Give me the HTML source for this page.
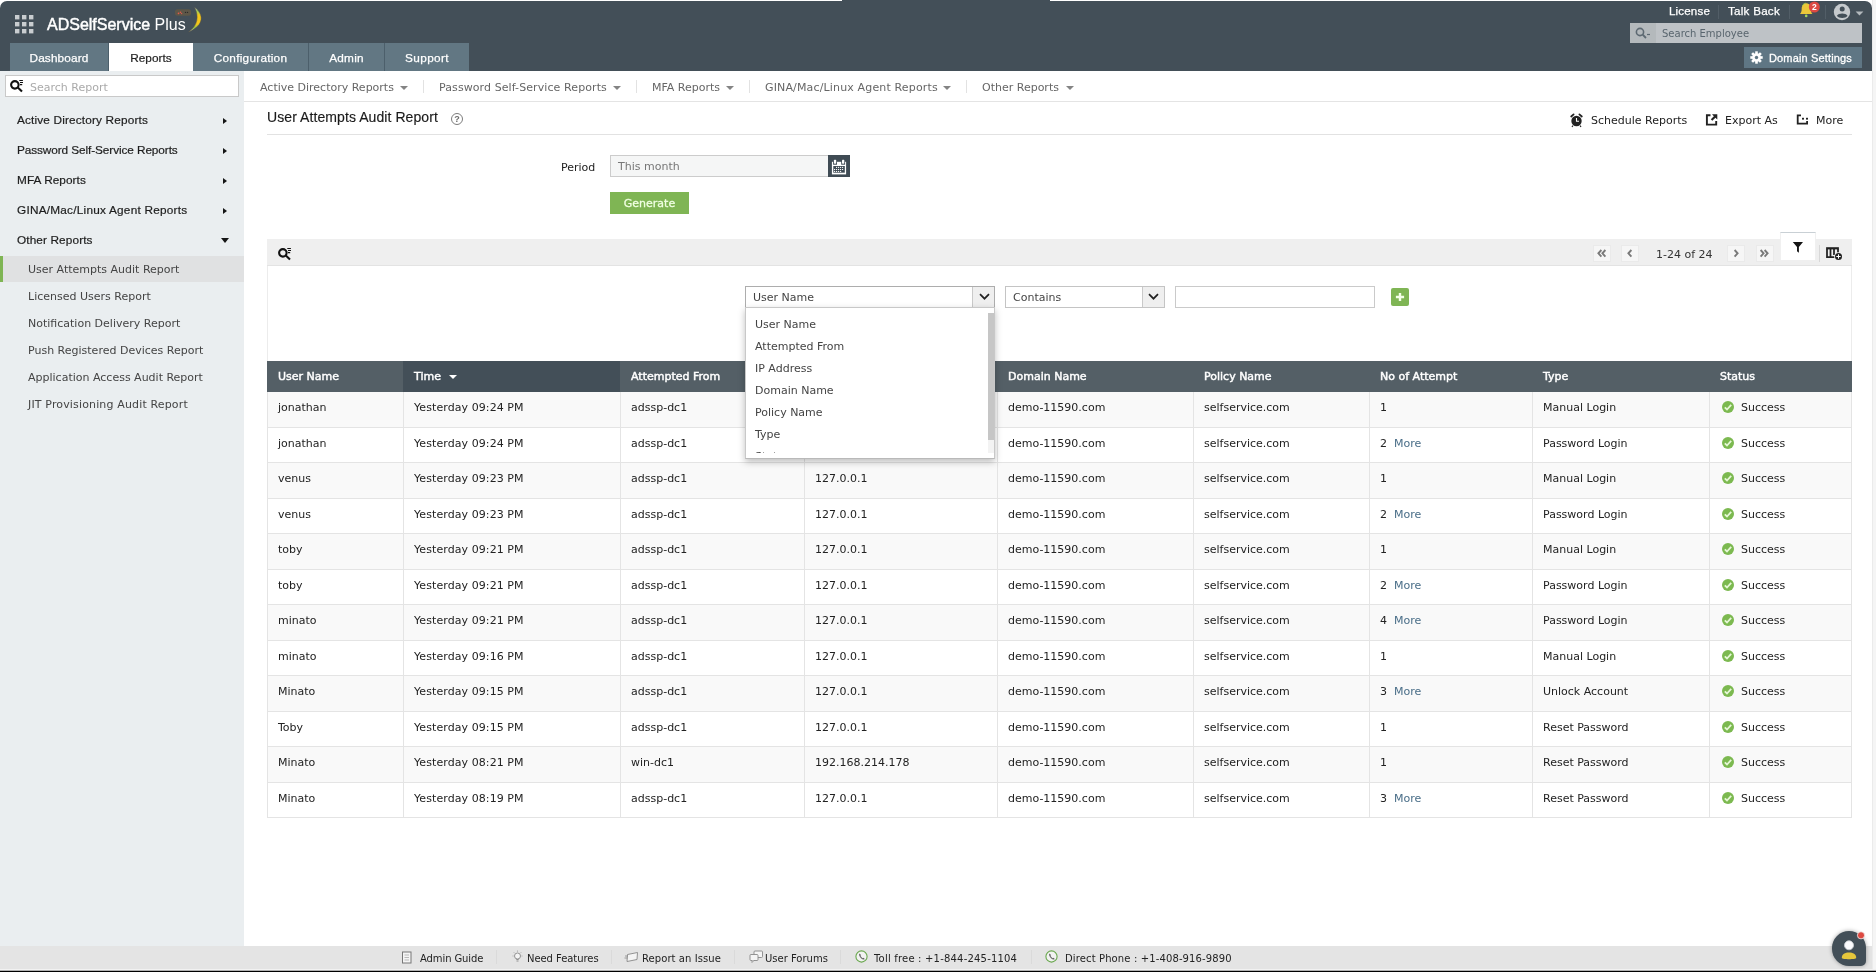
<!DOCTYPE html>
<html lang="en">
<head>
<meta charset="utf-8">
<title>ADSelfService Plus - User Attempts Audit Report</title>
<style>
*{box-sizing:border-box;margin:0;padding:0}
html,body{width:1876px;height:972px;overflow:hidden;background:#fff}
body{position:relative;font-family:"DejaVu Sans","Liberation Sans",sans-serif;font-size:11px;color:#333}
#app{position:absolute;left:0;top:0;width:1876px;height:972px;will-change:transform}
.abs{position:absolute}
.nw{white-space:nowrap}
.lib{font-family:"Liberation Sans",sans-serif}
svg{position:absolute;overflow:visible}
#rstrip{left:1872px;top:0;width:4px;height:970px;background:#f5f5f5;border-left:1px solid #ebebeb}
#botline{left:0;top:969px;width:1876px;height:3px;background:linear-gradient(#f2f2f2 0,#f2f2f2 1px,#b0b0b0 1px,#b0b0b0 2px,#000 2px)}
#hdr{left:0;top:1px;width:1872px;height:70px;background:#434f58;border-radius:7px 7px 0 0}
#topline{left:842px;top:0;width:208px;height:1px;background:#434f58}
.tab{top:43px;height:28px;background:#627783;color:#fff;font-family:"Liberation Sans",sans-serif;font-size:11.8px;text-align:center;line-height:31px;-webkit-text-stroke:.25px #fff;border-right:1px solid #4c5f6b}
.tab.act{background:#fff;color:#222;-webkit-text-stroke:.2px #222;border-right:none;height:29px}
.hl{top:4px;height:14px;line-height:14px;color:#fff;font-family:"Liberation Sans",sans-serif;font-size:11.6px;-webkit-text-stroke:.25px #fff;white-space:nowrap}
.hsep{top:5px;width:1px;height:14px;background:#525e67}
#semp{left:1630px;top:23px;width:232px;height:20px;background:#bec2c6}
#semp i{position:absolute;left:0;top:0;width:26px;height:20px;background:#b4b9bc}
#semp span{position:absolute;left:32px;top:4px;line-height:14px;color:#59656e;font-size:10px;white-space:nowrap}
#dset{left:1744px;top:47px;width:118px;height:21px;background:#5f7684;color:#fff;font-size:10.4px;font-weight:bold;line-height:21px;white-space:nowrap}
#dset span{position:absolute;left:25px;top:1px;font-family:"Liberation Sans",sans-serif;font-size:11px;letter-spacing:.15px}
#side{left:0;top:71px;width:244px;height:875px;background:#eaeef0}
#sbox{left:5px;top:75px;width:234px;height:22px;background:#fff;border:1px solid #c9c9c9}
#sbox span{position:absolute;left:24px;top:5px;line-height:13px;font-size:11px;color:#aaa;white-space:nowrap}
.sm{left:17px;height:16px;line-height:16px;font-family:"Liberation Sans",sans-serif;font-size:11.8px;color:#1d1d1d;white-space:nowrap;-webkit-text-stroke:.2px #1d1d1d}
.si{left:28px;height:14px;line-height:14px;font-size:11px;color:#444;white-space:nowrap}
#ssel{left:0;top:256px;width:244px;height:26px;background:#e0e1e2;border-left:3px solid #7fb554}
.arr-r{left:223px;width:0;height:0;border-top:3.5px solid transparent;border-bottom:3.5px solid transparent;border-left:4.8px solid #151515}
.arr-d{left:220.7px;width:0;height:0;border-left:4px solid transparent;border-right:4px solid transparent;border-top:5.2px solid #151515}
.sn{top:81px;font-size:11px;color:#666;white-space:nowrap;line-height:14px;height:14px}
.snsep{top:80px;width:1px;height:13px;background:#e2e2e2}
.car{top:86px;width:0;height:0;border-left:4px solid transparent;border-right:4px solid transparent;border-top:4px solid #848484}
#snline{left:244px;top:101px;width:1628px;height:1px;background:#e4e4e4}
#title{left:267px;top:108px;height:18px;line-height:18px;font-family:"Liberation Sans",sans-serif;font-size:14px;letter-spacing:.08px;color:#1a1a1a;white-space:nowrap;-webkit-text-stroke:.15px #1a1a1a}
#tline{left:267px;top:134px;width:1585px;height:1px;background:#e2e2e2}
.actn{top:114px;height:14px;line-height:14px;font-size:11px;color:#222;white-space:nowrap}
#plabel{left:561px;top:161px;line-height:14px;font-size:11px;color:#222}
#pinput{left:610px;top:155px;width:219px;height:22px;background:#f5f6f6;border:1px solid #cccccc}
#pinput span{position:absolute;left:7px;top:4px;line-height:13px;color:#777;font-size:11px}
#pcal{left:828px;top:155px;width:22px;height:22px;background:#3f4b54}
#gen{left:610px;top:192px;width:79px;height:22px;background:#7fb554;color:#f0ffe2;font-size:11px;text-align:center;line-height:23px;-webkit-text-stroke:.3px #f0ffe2}
#tbar{left:267px;top:239px;width:1585px;height:27px;background:#efefef;border-bottom:1px solid #e3e3e3}
.pg{top:245px;width:18px;height:17px;background:#f6f6f6;border:1px solid #eaeaea}
#pgt{left:1656px;top:248px;line-height:14px;font-size:11px;color:#333;white-space:nowrap}
#ftab{left:1780px;top:232px;width:36px;height:28px;background:#fff;border-top:1px solid #c9d0d5;border-left:1px solid #f0f0f0;border-right:1px solid #f0f0f0}
#tsep{left:1819px;top:245px;width:1px;height:17px;background:#d8d8d8}
.sel{top:286px;height:22px;background:#fff;border:1px solid #adadad}
.sel span{position:absolute;left:7px;top:4px;line-height:14px;font-size:11px;color:#444;white-space:nowrap}
.sel i{position:absolute;right:0;top:0;width:22px;height:20px;border-left:1px solid #c9c9c9;background:#efefef}
#finput{left:1175px;top:286px;width:200px;height:22px;background:#fff;border:1px solid #cacaca}
#fplus{left:1391px;top:288px;width:18px;height:18px;background:#7fb554;border-radius:2px}
#dd{left:745px;top:307px;width:250px;height:152px;background:#fff;border:1px solid #c8c8c8;border-bottom-color:#b9b9b9;box-shadow:0 3px 7px rgba(0,0,0,.26);overflow:hidden}
#ddin{left:0;top:0;width:240px;height:145px;overflow:hidden}
#dd span{position:absolute;left:9px;line-height:14px;height:14px;font-size:11px;color:#444;white-space:nowrap}
#ddtrack{left:242px;top:5px;width:7px;height:140px;background:#f3f3f3}
#ddthumb{left:242px;top:5px;width:6.5px;height:127px;background:#c6c6c6}
#thead{left:267px;top:361px;width:1585px;height:31px;background:#545f66}
#thsort{left:403px;top:361px;width:217px;height:31px;background:#434f58}
.th{top:370px;line-height:14px;color:#fff;font-size:11px;white-space:nowrap;-webkit-text-stroke:.45px #fff}
.row{left:267px;width:1585px;border-bottom:1px solid #e4e4e4;border-left:1px solid #e4e4e4;border-right:1px solid #e4e4e4}
.row.odd{background:#f9f9f9}
.row span{position:absolute;top:50%;margin-top:-8px;line-height:14px;height:14px;font-size:11px;color:#222;white-space:nowrap}
.row a{color:#4a6e88;margin-left:7px}
.cl{top:392px;width:1px;height:426px;background:#e4e4e4}
.row span.ok{width:12px;height:12px;border-radius:50%;background:#7cb950}
#foot{left:0;top:946px;width:1872px;height:23px;background:#e4e4e4}
.ft{top:951.6px;line-height:14px;height:14px;font-size:10px;color:#222;white-space:nowrap}
.fsep{top:950px;width:1px;height:14px;background:#dadada}
</style>
</head>
<body>
<div id="app">
<div class="abs" id="topline"></div>
<div class="abs" id="hdr"></div>
<div class="abs" id="rstrip"></div>
<svg style="left:0;top:0" width="40" height="40"><rect x="15" y="15" width="4.4" height="4.4" fill="#c9cdd0"/><rect x="15" y="22" width="4.4" height="4.4" fill="#c9cdd0"/><rect x="15" y="29" width="4.4" height="4.4" fill="#c9cdd0"/><rect x="22" y="15" width="4.4" height="4.4" fill="#c9cdd0"/><rect x="22" y="22" width="4.4" height="4.4" fill="#c9cdd0"/><rect x="22" y="29" width="4.4" height="4.4" fill="#c9cdd0"/><rect x="29" y="15" width="4.4" height="4.4" fill="#c9cdd0"/><rect x="29" y="22" width="4.4" height="4.4" fill="#c9cdd0"/><rect x="29" y="29" width="4.4" height="4.4" fill="#c9cdd0"/></svg>
<div class="abs lib nw" style="left:47px;top:14px;line-height:22px;font-size:16px;color:#fff"><b style="font-weight:normal;-webkit-text-stroke:.45px #fff">ADSelfService</b> Plus</div>
<svg style="left:170px;top:0" width="40" height="36"><defs><linearGradient id="sw" x1="0" y1="0" x2="0" y2="1"><stop offset="0" stop-color="#f1f1f1"/><stop offset=".14" stop-color="#9ed15a"/><stop offset=".32" stop-color="#f4c61a"/><stop offset=".68" stop-color="#f4c61a"/><stop offset=".84" stop-color="#8fc84a"/><stop offset="1" stop-color="#f4f4f4"/></linearGradient></defs><path d="M24.700 7.600 C33.500 14 35 25 18.700 31.900 C28 25.500 29 16 24.700 7.600Z" fill="url(#sw)" stroke="#5d5540" stroke-width=".5"/><rect x="5" y="9.300" width="16" height="6.400" rx="2.500" fill="#6a5b42" opacity=".7"/><circle cx="8.500" cy="13.400" r=".8" fill="#e8584a"/><circle cx="10.500" cy="12.300" r=".8" fill="#e8584a"/><circle cx="11.600" cy="13.600" r=".7" fill="#e8584a"/><circle cx="15.500" cy="12.400" r=".7" fill="#2a2a2a"/><circle cx="17.500" cy="12.400" r=".7" fill="#2a2a2a"/></svg>
<div class="abs tab" style="left:10px;width:99px;letter-spacing:0.14px">Dashboard</div>
<div class="abs tab act" style="left:109px;width:84px;letter-spacing:0.03px">Reports</div>
<div class="abs tab" style="left:193px;width:116px;letter-spacing:0.255px">Configuration</div>
<div class="abs tab" style="left:309px;width:76px;letter-spacing:0.23px">Admin</div>
<div class="abs tab" style="left:385px;width:84px;border-right:none;letter-spacing:0.38px">Support</div>
<div class="abs hl" style="left:1669px;letter-spacing:.15px">License</div>
<div class="abs hsep" style="left:1718px"></div>
<div class="abs hl" style="left:1728px;letter-spacing:.26px">Talk Back</div>
<div class="abs hsep" style="left:1789px"></div>
<svg style="left:1796px;top:0" width="26" height="22"><path d="M10.400 3.200 C6.800 3.400 5.700 6.500 5.700 9 C5.700 11.800 5 12.800 3.900 14.100 L16.500 14.100 C15.400 12.800 15 11.800 15 9 C15 6.500 14 3.400 10.400 3.200Z" fill="#ecc73a"/><path d="M6.300 5.800 C7 4.300 8.300 3.400 9.800 3.200" stroke="#9ccf4e" stroke-width="1" fill="none"/><circle cx="10.200" cy="15.900" r="1.300" fill="#a5d65a"/><circle cx="18.300" cy="7" r="5.500" fill="#dd4a42"/><text x="18.300" y="10.100" font-family="Liberation Sans,sans-serif" font-size="8.500" font-weight="bold" fill="#fff" text-anchor="middle">2</text></svg>
<div class="abs hsep" style="left:1825px"></div>
<svg style="left:1832px;top:2px" width="34" height="20"><circle cx="10" cy="10" r="8.2" fill="#c6cacd"/><circle cx="10.200" cy="7" r="2.500" fill="#434f58"/><path d="M4.900 13.700 C6.500 10.700 13.900 10.700 15.500 13.700 C13.900 16.600 6.500 16.600 4.900 13.700Z" fill="#434f58"/><path d="M23.600 9.5 L31.400 9.500 L27.500 13.500Z" fill="#b3b9bd"/></svg>
<div class="abs" id="semp"><i></i><span>Search Employee</span></div>
<svg style="left:1634px;top:26px" width="18" height="14"><circle cx="6" cy="6" r="3.6" fill="none" stroke="#5d6972" stroke-width="1.6"/><path d="M8.700 8.700 L12 12" stroke="#5d6972" stroke-width="1.8"/><path d="M13 8.500 L16 8.500" stroke="#5d6972" stroke-width="1.2"/></svg>
<div class="abs" id="dset"><span style="-webkit-text-stroke:.3px #fff;font-weight:normal">Domain Settings</span></div>
<svg style="left:1750px;top:51px" width="13" height="13"><g transform="translate(6.5 6.5)"><rect x="-1.3" y="-6.2" width="2.6" height="3" fill="#fff" transform="rotate(0)"/><rect x="-1.3" y="-6.2" width="2.6" height="3" fill="#fff" transform="rotate(45)"/><rect x="-1.3" y="-6.2" width="2.6" height="3" fill="#fff" transform="rotate(90)"/><rect x="-1.3" y="-6.2" width="2.6" height="3" fill="#fff" transform="rotate(135)"/><rect x="-1.3" y="-6.2" width="2.6" height="3" fill="#fff" transform="rotate(180)"/><rect x="-1.3" y="-6.2" width="2.6" height="3" fill="#fff" transform="rotate(225)"/><rect x="-1.3" y="-6.2" width="2.6" height="3" fill="#fff" transform="rotate(270)"/><rect x="-1.3" y="-6.2" width="2.6" height="3" fill="#fff" transform="rotate(315)"/><circle r="4.3" fill="#fff"/><circle r="1.7" fill="#5f7684"/></g></svg>
<div class="abs" id="side"></div>
<div class="abs" id="sbox"><span>Search Report</span></div>
<svg style="left:10px;top:80px" width="15" height="14"><circle cx="4.86" cy="4.86" r="3.75" fill="none" stroke="#111" stroke-width="2.1"/><path d="M7.800 7.600 L12 11.600" stroke="#111" stroke-width="2.1"/><path d="M9.300 .5 H12.900 M10 2.500 H13 M10 4.600 H12.200" stroke="#111" stroke-width="1.100"/></svg>
<div class="abs sm" style="top:112px;letter-spacing:0.16px;">Active Directory Reports</div>
<div class="abs arr-r" style="top:118px"></div>
<div class="abs sm" style="top:142px;letter-spacing:-0.09px;">Password Self-Service Reports</div>
<div class="abs arr-r" style="top:148px"></div>
<div class="abs sm" style="top:172px;letter-spacing:0.065px;">MFA Reports</div>
<div class="abs arr-r" style="top:178px"></div>
<div class="abs sm" style="top:202px;letter-spacing:0.23px;">GINA/Mac/Linux Agent Reports</div>
<div class="abs arr-r" style="top:208px"></div>
<div class="abs sm" style="top:232px;letter-spacing:0.115px;">Other Reports</div>
<div class="abs arr-d" style="top:238px"></div>
<div class="abs" id="ssel"></div>
<div class="abs si" style="top:263px;">User Attempts Audit Report</div>
<div class="abs si" style="top:290px;">Licensed Users Report</div>
<div class="abs si" style="top:317px;">Notification Delivery Report</div>
<div class="abs si" style="top:344px;">Push Registered Devices Report</div>
<div class="abs si" style="top:371px;">Application Access Audit Report</div>
<div class="abs si" style="top:398px;letter-spacing:.15px">JIT Provisioning Audit Report</div>
<div class="abs sn" style="left:260px">Active Directory Reports</div><div class="abs car" style="left:400px"></div>
<div class="abs snsep" style="left:423px"></div>
<div class="abs sn" style="left:439px;letter-spacing:.09px">Password Self-Service Reports</div><div class="abs car" style="left:613px"></div>
<div class="abs snsep" style="left:636px"></div>
<div class="abs sn" style="left:652px">MFA Reports</div><div class="abs car" style="left:726px"></div>
<div class="abs snsep" style="left:749px"></div>
<div class="abs sn" style="left:765px;letter-spacing:.15px">GINA/Mac/Linux Agent Reports</div><div class="abs car" style="left:943px"></div>
<div class="abs snsep" style="left:966px"></div>
<div class="abs sn" style="left:982px">Other Reports</div><div class="abs car" style="left:1066px"></div>
<div class="abs" id="snline"></div>
<div class="abs" id="title">User Attempts Audit Report</div>
<svg style="left:450px;top:112px" width="14" height="14"><circle cx="7" cy="7" r="5.500" fill="none" stroke="#7c7c7c" stroke-width="1"/><text x="7" y="10.300" font-family="Liberation Sans,sans-serif" font-size="9" font-weight="bold" fill="#6a6a6a" text-anchor="middle">?</text></svg>
<div class="abs" id="tline"></div>
<svg style="left:1569px;top:112px" width="16" height="17"><circle cx="7.500" cy="9" r="5.200" fill="#222"/><path d="M7.500 6 V9.300 H10" stroke="#fff" stroke-width="1.1" fill="none"/><path d="M2.200 4.500 L4.600 2.400 M12.800 4.500 L10.400 2.400" stroke="#222" stroke-width="1.800" stroke-linecap="round"/><path d="M4 13.500 L3 15 M11 13.500 L12 15" stroke="#222" stroke-width="1.200"/></svg>
<div class="abs actn" style="left:1591px">Schedule Reports</div>
<svg style="left:1705px;top:113px" width="14" height="14"><path d="M5.500 2.300 H1.900 V11.600 H11.200 V8" fill="none" stroke="#222" stroke-width="1.900"/><path d="M7 1.300 H12.300 V6.600 L10.400 4.700 L7.300 7.800 L5.800 6.300 L8.900 3.200Z" fill="#222"/></svg>
<div class="abs actn" style="left:1725px">Export As</div>
<svg style="left:1796px;top:114px" width="14" height="12"><path d="M.8 .4 H5 V2.200 H2.600 V8.700 H10.200 V7 H12 V10.500 H.8Z" fill="#222"/><rect x="6" y="3.800" width="2" height="1.800" fill="#222"/><rect x="10" y="3.800" width="2" height="1.800" fill="#222"/></svg>
<div class="abs actn" style="left:1816px">More</div>
<div class="abs" id="plabel">Period</div>
<div class="abs" id="pinput"><span>This month</span></div>
<div class="abs" id="pcal"></div>
<svg style="left:828px;top:155px" width="22" height="22"><rect x="3.900" y="6.800" width="14.200" height="12.600" fill="#fff"/><rect x="5.100" y="6" width="3.900" height="3.700" fill="#3f4b54"/><rect x="13.200" y="6" width="3.900" height="3.700" fill="#3f4b54"/><rect x="5.900" y="4.800" width="2.300" height="4" rx=".7" fill="#fff"/><rect x="14" y="4.800" width="2.300" height="4" rx=".7" fill="#fff"/><rect x="5.300" y="11" width="11.500" height="6.700" fill="#3f4b54"/><rect x="8.05" y="11.85" width="1.100" height="1.100" fill="#fff"/><rect x="10.05" y="11.85" width="1.100" height="1.100" fill="#fff"/><rect x="12.05" y="11.85" width="1.100" height="1.100" fill="#fff"/><rect x="14.05" y="11.85" width="1.100" height="1.100" fill="#fff"/><rect x="6.05" y="13.95" width="1.100" height="1.100" fill="#fff"/><rect x="8.05" y="13.95" width="1.100" height="1.100" fill="#fff"/><rect x="10.05" y="13.95" width="1.100" height="1.100" fill="#fff"/><rect x="12.05" y="13.95" width="1.100" height="1.100" fill="#fff"/><rect x="14.05" y="13.95" width="1.100" height="1.100" fill="#fff"/><rect x="6.05" y="15.95" width="1.100" height="1.100" fill="#fff"/><rect x="8.05" y="15.95" width="1.100" height="1.100" fill="#fff"/><rect x="10.05" y="15.95" width="1.100" height="1.100" fill="#fff"/><rect x="12.05" y="15.95" width="1.100" height="1.100" fill="#fff"/></svg>
<div class="abs" id="gen">Generate</div>
<div class="abs" id="tbar"></div>
<svg style="left:278px;top:248px" width="15" height="14"><circle cx="4.86" cy="4.86" r="3.75" fill="none" stroke="#111" stroke-width="2.1"/><path d="M7.800 7.600 L12 11.600" stroke="#111" stroke-width="2.1"/><path d="M9.300 .5 H12.900 M10 2.500 H13 M10 4.600 H12.200" stroke="#111" stroke-width="1.100"/></svg>
<div class="abs pg" style="left:1593px"></div>
<div class="abs pg" style="left:1621px"></div>
<div class="abs pg" style="left:1727px"></div>
<div class="abs pg" style="left:1756px"></div>
<svg style="left:1593px;top:250.300px" width="200" height="8"><path d="M8.40 0 L5.40 3.3 L8.40 6.6 M12.40 0 L9.40 3.3 L12.40 6.6 M38.40 0 L35.40 3.3 L38.40 6.6 M141.60 0 L144.60 3.3 L141.60 6.6 M167.60 0 L170.60 3.3 L167.60 6.6 M171.60 0 L174.60 3.3 L171.60 6.6" fill="none" stroke="#7a7a7a" stroke-width="1.900"/></svg>
<div class="abs" id="pgt">1-24 of 24</div>
<div class="abs" id="ftab"></div>
<svg style="left:1792px;top:241px" width="12" height="13"><path d="M.8 1 H11 L6.900 6 V11.800 L5 10.300 V6Z" fill="#151515"/></svg>
<div class="abs" id="tsep"></div>
<svg style="left:1826px;top:246px" width="18" height="15"><path d="M.1 1.200 H12.900 V3.400 H.1Z" fill="#222"/><path d="M1 3 V11.800 M4.500 3 V11.800 M8 3 V9 M12 3 V6.500 M.1 11.100 H8.500" fill="none" stroke="#222" stroke-width="1.750"/><circle cx="12.500" cy="10.500" r="4.100" fill="#efefef"/><circle cx="12.500" cy="10.500" r="3.500" fill="#222"/><path d="M10.300 10.500 H14.700 M12.500 8.300 V12.700" stroke="#fff" stroke-width="1"/></svg>
<div class="abs" style="left:267px;top:266px;width:1585px;height:95px;border-left:1px solid #ececec;border-right:1px solid #ececec"></div>
<div class="abs sel" style="left:745px;width:250px"><span>User Name</span><i></i></div>
<div class="abs sel" style="left:1005px;width:160px;border-color:#c4c4c4"><span>Contains</span><i></i></div>
<svg style="left:979px;top:293px" width="12" height="8"><path d="M1 1.200 L5.500 5.700 L10 1.200" fill="none" stroke="#222" stroke-width="1.700"/></svg>
<svg style="left:1148px;top:293px" width="12" height="8"><path d="M1 1.200 L5.500 5.700 L10 1.200" fill="none" stroke="#222" stroke-width="1.700"/></svg>
<div class="abs" id="finput"></div>
<div class="abs" id="fplus"></div>
<svg style="left:1391px;top:288px" width="18" height="18"><path d="M4.900 9 H13.100 M9 4.900 V13.100" stroke="#f4ffe8" stroke-width="2.400"/></svg>
<div class="abs" id="thead"></div><div class="abs" id="thsort"></div>
<div class="abs th" style="left:278px">User Name</div>
<div class="abs th" style="left:414px">Time</div>
<div class="abs th" style="left:631px">Attempted From</div>
<div class="abs th" style="left:815px">IP Address</div>
<div class="abs th" style="left:1008px">Domain Name</div>
<div class="abs th" style="left:1204px">Policy Name</div>
<div class="abs th" style="left:1380px">No of Attempt</div>
<div class="abs th" style="left:1543px">Type</div>
<div class="abs th" style="left:1720px">Status</div>
<div class="abs" style="left:449px;top:375px;width:0;height:0;border-left:4px solid transparent;border-right:4px solid transparent;border-top:4px solid #fff"></div>
<div class="abs row odd" style="top:392.0px;height:35.5px"><span style="left:10px">jonathan</span><span style="left:146px;letter-spacing:.08px">Yesterday 09:24 PM</span><span style="left:363px">adssp-dc1</span><span style="left:547px">127.0.0.1</span><span style="left:740px">demo-11590.com</span><span style="left:936px">selfservice.com</span><span style="left:1112px">1</span><span style="left:1275px">Manual Login</span><span class="ok" style="left:1454px;margin-top:-8px"></span><svg style="left:1454px;top:50%;margin-top:-8px" width="12" height="12"><path d="M2.800 6.300 L5 8.500 L9.200 3.900" fill="none" stroke="#e6f7d6" stroke-width="1.800"/></svg><span style="left:1473px">Success</span></div>
<div class="abs row" style="top:427.5px;height:35.5px"><span style="left:10px">jonathan</span><span style="left:146px;letter-spacing:.08px">Yesterday 09:24 PM</span><span style="left:363px">adssp-dc1</span><span style="left:547px">127.0.0.1</span><span style="left:740px">demo-11590.com</span><span style="left:936px">selfservice.com</span><span style="left:1112px">2<a>More</a></span><span style="left:1275px">Password Login</span><span class="ok" style="left:1454px;margin-top:-8px"></span><svg style="left:1454px;top:50%;margin-top:-8px" width="12" height="12"><path d="M2.800 6.300 L5 8.500 L9.200 3.900" fill="none" stroke="#e6f7d6" stroke-width="1.800"/></svg><span style="left:1473px">Success</span></div>
<div class="abs row odd" style="top:463.0px;height:35.5px"><span style="left:10px">venus</span><span style="left:146px;letter-spacing:.08px">Yesterday 09:23 PM</span><span style="left:363px">adssp-dc1</span><span style="left:547px">127.0.0.1</span><span style="left:740px">demo-11590.com</span><span style="left:936px">selfservice.com</span><span style="left:1112px">1</span><span style="left:1275px">Manual Login</span><span class="ok" style="left:1454px;margin-top:-8px"></span><svg style="left:1454px;top:50%;margin-top:-8px" width="12" height="12"><path d="M2.800 6.300 L5 8.500 L9.200 3.900" fill="none" stroke="#e6f7d6" stroke-width="1.800"/></svg><span style="left:1473px">Success</span></div>
<div class="abs row" style="top:498.5px;height:35.5px"><span style="left:10px">venus</span><span style="left:146px;letter-spacing:.08px">Yesterday 09:23 PM</span><span style="left:363px">adssp-dc1</span><span style="left:547px">127.0.0.1</span><span style="left:740px">demo-11590.com</span><span style="left:936px">selfservice.com</span><span style="left:1112px">2<a>More</a></span><span style="left:1275px">Password Login</span><span class="ok" style="left:1454px;margin-top:-8px"></span><svg style="left:1454px;top:50%;margin-top:-8px" width="12" height="12"><path d="M2.800 6.300 L5 8.500 L9.200 3.900" fill="none" stroke="#e6f7d6" stroke-width="1.800"/></svg><span style="left:1473px">Success</span></div>
<div class="abs row odd" style="top:534.0px;height:35.5px"><span style="left:10px">toby</span><span style="left:146px;letter-spacing:.08px">Yesterday 09:21 PM</span><span style="left:363px">adssp-dc1</span><span style="left:547px">127.0.0.1</span><span style="left:740px">demo-11590.com</span><span style="left:936px">selfservice.com</span><span style="left:1112px">1</span><span style="left:1275px">Manual Login</span><span class="ok" style="left:1454px;margin-top:-8px"></span><svg style="left:1454px;top:50%;margin-top:-8px" width="12" height="12"><path d="M2.800 6.300 L5 8.500 L9.200 3.900" fill="none" stroke="#e6f7d6" stroke-width="1.800"/></svg><span style="left:1473px">Success</span></div>
<div class="abs row" style="top:569.5px;height:35.5px"><span style="left:10px">toby</span><span style="left:146px;letter-spacing:.08px">Yesterday 09:21 PM</span><span style="left:363px">adssp-dc1</span><span style="left:547px">127.0.0.1</span><span style="left:740px">demo-11590.com</span><span style="left:936px">selfservice.com</span><span style="left:1112px">2<a>More</a></span><span style="left:1275px">Password Login</span><span class="ok" style="left:1454px;margin-top:-8px"></span><svg style="left:1454px;top:50%;margin-top:-8px" width="12" height="12"><path d="M2.800 6.300 L5 8.500 L9.200 3.900" fill="none" stroke="#e6f7d6" stroke-width="1.800"/></svg><span style="left:1473px">Success</span></div>
<div class="abs row odd" style="top:605.0px;height:35.5px"><span style="left:10px">minato</span><span style="left:146px;letter-spacing:.08px">Yesterday 09:21 PM</span><span style="left:363px">adssp-dc1</span><span style="left:547px">127.0.0.1</span><span style="left:740px">demo-11590.com</span><span style="left:936px">selfservice.com</span><span style="left:1112px">4<a>More</a></span><span style="left:1275px">Password Login</span><span class="ok" style="left:1454px;margin-top:-8px"></span><svg style="left:1454px;top:50%;margin-top:-8px" width="12" height="12"><path d="M2.800 6.300 L5 8.500 L9.200 3.900" fill="none" stroke="#e6f7d6" stroke-width="1.800"/></svg><span style="left:1473px">Success</span></div>
<div class="abs row" style="top:640.5px;height:35.5px"><span style="left:10px">minato</span><span style="left:146px;letter-spacing:.08px">Yesterday 09:16 PM</span><span style="left:363px">adssp-dc1</span><span style="left:547px">127.0.0.1</span><span style="left:740px">demo-11590.com</span><span style="left:936px">selfservice.com</span><span style="left:1112px">1</span><span style="left:1275px">Manual Login</span><span class="ok" style="left:1454px;margin-top:-8px"></span><svg style="left:1454px;top:50%;margin-top:-8px" width="12" height="12"><path d="M2.800 6.300 L5 8.500 L9.200 3.900" fill="none" stroke="#e6f7d6" stroke-width="1.800"/></svg><span style="left:1473px">Success</span></div>
<div class="abs row odd" style="top:676.0px;height:35.5px"><span style="left:10px">Minato</span><span style="left:146px;letter-spacing:.08px">Yesterday 09:15 PM</span><span style="left:363px">adssp-dc1</span><span style="left:547px">127.0.0.1</span><span style="left:740px">demo-11590.com</span><span style="left:936px">selfservice.com</span><span style="left:1112px">3<a>More</a></span><span style="left:1275px">Unlock Account</span><span class="ok" style="left:1454px;margin-top:-8px"></span><svg style="left:1454px;top:50%;margin-top:-8px" width="12" height="12"><path d="M2.800 6.300 L5 8.500 L9.200 3.900" fill="none" stroke="#e6f7d6" stroke-width="1.800"/></svg><span style="left:1473px">Success</span></div>
<div class="abs row" style="top:711.5px;height:35.5px"><span style="left:10px">Toby</span><span style="left:146px;letter-spacing:.08px">Yesterday 09:15 PM</span><span style="left:363px">adssp-dc1</span><span style="left:547px">127.0.0.1</span><span style="left:740px">demo-11590.com</span><span style="left:936px">selfservice.com</span><span style="left:1112px">1</span><span style="left:1275px">Reset Password</span><span class="ok" style="left:1454px;margin-top:-8px"></span><svg style="left:1454px;top:50%;margin-top:-8px" width="12" height="12"><path d="M2.800 6.300 L5 8.500 L9.200 3.900" fill="none" stroke="#e6f7d6" stroke-width="1.800"/></svg><span style="left:1473px">Success</span></div>
<div class="abs row odd" style="top:747.0px;height:35.5px"><span style="left:10px">Minato</span><span style="left:146px;letter-spacing:.08px">Yesterday 08:21 PM</span><span style="left:363px">win-dc1</span><span style="left:547px">192.168.214.178</span><span style="left:740px">demo-11590.com</span><span style="left:936px">selfservice.com</span><span style="left:1112px">1</span><span style="left:1275px">Reset Password</span><span class="ok" style="left:1454px;margin-top:-8px"></span><svg style="left:1454px;top:50%;margin-top:-8px" width="12" height="12"><path d="M2.800 6.300 L5 8.500 L9.200 3.900" fill="none" stroke="#e6f7d6" stroke-width="1.800"/></svg><span style="left:1473px">Success</span></div>
<div class="abs row" style="top:782.5px;height:35.5px"><span style="left:10px">Minato</span><span style="left:146px;letter-spacing:.08px">Yesterday 08:19 PM</span><span style="left:363px">adssp-dc1</span><span style="left:547px">127.0.0.1</span><span style="left:740px">demo-11590.com</span><span style="left:936px">selfservice.com</span><span style="left:1112px">3<a>More</a></span><span style="left:1275px">Reset Password</span><span class="ok" style="left:1454px;margin-top:-8px"></span><svg style="left:1454px;top:50%;margin-top:-8px" width="12" height="12"><path d="M2.800 6.300 L5 8.500 L9.200 3.900" fill="none" stroke="#e6f7d6" stroke-width="1.800"/></svg><span style="left:1473px">Success</span></div>
<div class="abs cl" style="left:403px"></div>
<div class="abs cl" style="left:620px"></div>
<div class="abs cl" style="left:804px"></div>
<div class="abs cl" style="left:997px"></div>
<div class="abs cl" style="left:1193px"></div>
<div class="abs cl" style="left:1369px"></div>
<div class="abs cl" style="left:1532px"></div>
<div class="abs cl" style="left:1709px"></div>
<div class="abs" id="dd"><div class="abs" id="ddin"><span style="top:10px">User Name</span><span style="top:32px">Attempted From</span><span style="top:54px">IP Address</span><span style="top:76px">Domain Name</span><span style="top:98px">Policy Name</span><span style="top:120px">Type</span><span style="top:141.5px">Status</span></div><div class="abs" id="ddtrack"></div><div class="abs" id="ddthumb"></div></div>
<div class="abs" id="foot"></div>
<div class="abs ft" style="left:420px;letter-spacing:-0.1px">Admin Guide</div>
<div class="abs ft" style="left:527px;letter-spacing:-0.055px">Need Features</div>
<div class="abs ft" style="left:642px;letter-spacing:0.07px">Report an Issue</div>
<div class="abs ft" style="left:765px;letter-spacing:0px">User Forums</div>
<div class="abs ft" style="left:874px;letter-spacing:0.195px">Toll free : +1-844-245-1104</div>
<div class="abs ft" style="left:1065px;letter-spacing:0.125px">Direct Phone : +1-408-916-9890</div>
<div class="abs fsep" style="left:496px"></div>
<div class="abs fsep" style="left:611px"></div>
<div class="abs fsep" style="left:734px"></div>
<div class="abs fsep" style="left:840px"></div>
<div class="abs fsep" style="left:1031px"></div>
<svg style="left:401px;top:951px" width="12" height="13"><rect x="1.500" y="1" width="8.500" height="11" fill="#f4f4f4" stroke="#777" stroke-width="1"/><path d="M3.500 4 H8 M3.500 6.500 H8 M3.500 9 H8" stroke="#aaa" stroke-width=".8"/></svg>
<svg style="left:511px;top:950px" width="13" height="14"><circle cx="6.500" cy="6" r="3" fill="#f4f4f4" stroke="#888" stroke-width=".9"/><path d="M5.300 9.500 H7.700 M5.500 11 H7.500" stroke="#888" stroke-width=".9"/><path d="M6.500 0.500 V1.800 M1.500 6 H2.500 M10.500 6 H11.500 M2.800 2.300 L3.600 3.100 M10.200 2.300 L9.400 3.100" stroke="#999" stroke-width=".7"/></svg>
<svg style="left:624px;top:951px" width="15" height="12"><path d="M3.500 3.500 L13.500 1.500 L13 8.500 L3 10.500Z" fill="#f4f4f4" stroke="#888" stroke-width=".9"/><path d="M1 5 H4 M0.500 7 H3.500" stroke="#888" stroke-width=".8"/></svg>
<svg style="left:749px;top:950px" width="15" height="14"><rect x="5" y="1" width="8.500" height="6.500" rx="1" fill="#f4f4f4" stroke="#888" stroke-width=".9"/><rect x="1" y="4.500" width="8" height="6" rx="1" fill="#f4f4f4" stroke="#888" stroke-width=".9"/><path d="M3 10.500 V12.500 L5 10.500" fill="#f4f4f4" stroke="#888" stroke-width=".8"/></svg>
<svg style="left:855px;top:950px" width="13" height="13"><circle cx="6.500" cy="6.500" r="5.600" fill="#f2f2f2" stroke="#6aa84f" stroke-width="1.100"/><path d="M4.400 3.600 C3.400 4.600 4.600 7 6 8.300 C7.300 9.500 9 10 9.700 9 L8.600 7.700 L7.700 8.200 C6.800 7.700 5.900 6.700 5.500 5.800 L6.100 5 Z" fill="#666"/></svg>
<svg style="left:1045px;top:950px" width="13" height="13"><circle cx="6.500" cy="6.500" r="5.600" fill="#f2f2f2" stroke="#6aa84f" stroke-width="1.100"/><path d="M4.400 3.600 C3.400 4.600 4.600 7 6 8.300 C7.300 9.500 9 10 9.700 9 L8.600 7.700 L7.700 8.200 C6.800 7.700 5.900 6.700 5.500 5.800 L6.100 5 Z" fill="#666"/></svg>
<div class="abs" style="left:1832px;top:931px;width:34px;height:35px;background:#434f58;border-radius:17px 17px 5px 17px;box-shadow:0 0 4px rgba(0,0,0,.35)"></div>
<svg style="left:1832px;top:931px" width="36" height="36"><circle cx="17" cy="14.300" r="4.500" fill="#fbfbfd" stroke="#c9ced2" stroke-width=".9"/><path d="M9.800 27 C9.300 19.800 24.700 19.800 24.200 27 C24 28.600 10 28.600 9.800 27Z" fill="#e6c63c"/><circle cx="29" cy="4.300" r="3.600" fill="#dd4a42" stroke="#f3f3f3" stroke-width=".8"/></svg>
<div class="abs" id="botline"></div>
</div>
</body>
</html>
